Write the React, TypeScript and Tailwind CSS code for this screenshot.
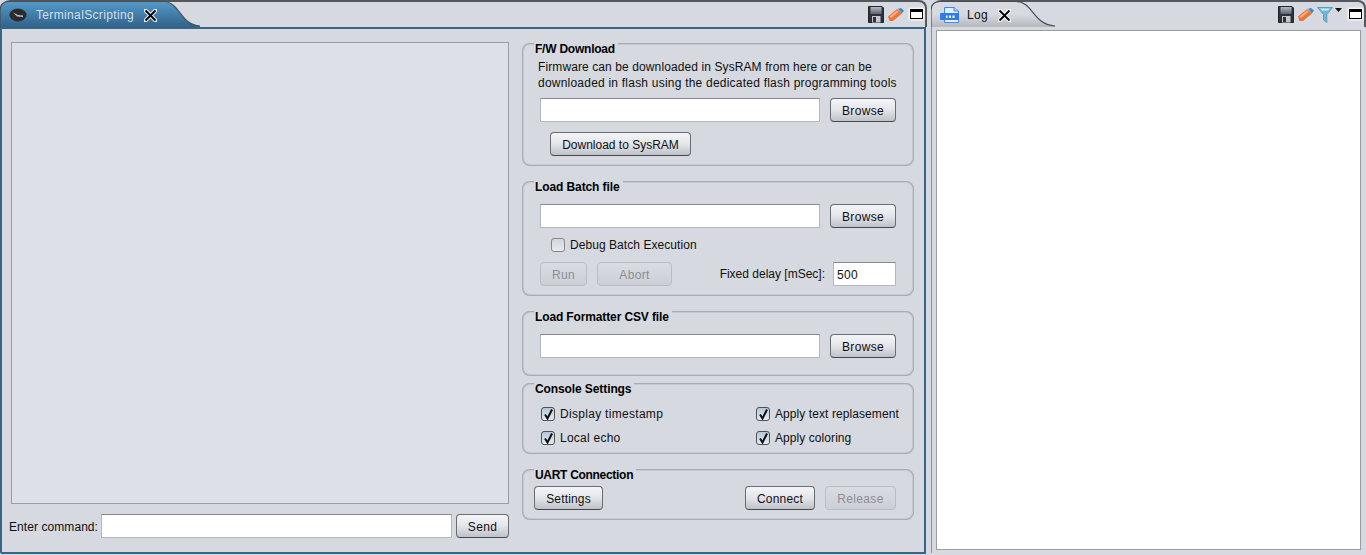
import React from "react";

const FONT = "font-['Liberation_Sans',Arial,sans-serif]";

function Save() {
  return (
    <svg width="16" height="17" viewBox="0 0 16 17" className="block">
      <defs>
        <linearGradient id="lab" x1="0" y1="0" x2="0" y2="1">
          <stop offset="0" stopColor="#b4b9c2" />
          <stop offset="1" stopColor="#5c6270" />
        </linearGradient>
      </defs>
      <path d="M0.5 0.5H14L15.5 2V16.5H0.5Z" fill="#2d333c" stroke="#23262c" />
      <rect x="2.5" y="1" width="11" height="7" fill="url(#lab)" />
      <rect x="4" y="10" width="8.5" height="6.5" fill="#c4c8ce" />
      <rect x="5" y="11" width="3" height="5" fill="#2d333c" />
    </svg>
  );
}

function Eraser() {
  return (
    <svg width="16" height="13" viewBox="0 0 16 13" className="block">
      <path d="M0 8.5L9 1L14 5.5L5 13L1.5 13Z" fill="#ee7435" />
      <path d="M1.5 8.5L9 2.5L10.5 3.8L3.2 10Z" fill="#f9b184" />
      <path d="M10 0.8L13 0L16 2.5L13.8 5.4Z" fill="#2f8fd8" />
    </svg>
  );
}

function Funnel() {
  return (
    <svg width="16" height="17" viewBox="0 0 16 17" className="block">
      <path d="M0.5 1.5H15.5L9.8 8.5V16.5L6.5 14V8.5Z" fill="#6fb9d6" stroke="#5a9fc0" strokeWidth="1" />
      <path d="M3 2.5H13L11 4.5H5Z" fill="#c4ecf5" />
    </svg>
  );
}

function Maximize() {
  return (
    <div className="w-[13px] h-[10px] border border-black border-t-[3px] bg-white shadow-[0_0_2px_1px_#ffffff]" />
  );
}

function CloseX() {
  return (
    <svg width="13" height="13" viewBox="0 0 13 13" className="block">
      <path d="M1.5 1.5L11.5 11.5M11.5 1.5L1.5 11.5" stroke="#ffffff" strokeWidth="4" strokeLinecap="round" opacity="0.85" />
      <path d="M1.5 1.5L11.5 11.5M11.5 1.5L1.5 11.5" stroke="#000000" strokeWidth="1.8" />
    </svg>
  );
}

function TerminalIcon() {
  return (
    <svg width="18" height="14" viewBox="0 0 18 14" className="block">
      <ellipse cx="9" cy="7" rx="8.5" ry="6.5" fill="#2b2b2d" />
      <path d="M4 4.5L9 7L14 7.5L14 9L8 8.5Z" fill="#b9bcc0" />
    </svg>
  );
}

function LogIcon() {
  return (
    <svg width="20" height="16" viewBox="0 0 20 16" className="block">
      <path d="M4.5 0.5H14L18.5 4V15.5H4.5Z" fill="#e4effc" stroke="#3f86ee" />
      <path d="M14 0.5V4H18.5" fill="#bcd6fa" stroke="#3f86ee" />
      <rect x="0" y="6" width="19" height="7" rx="1" fill="#2f7ce8" />
      <rect x="6" y="8.5" width="1.5" height="2.5" fill="#fff" />
      <rect x="9" y="8.5" width="2" height="2.5" fill="#fff" />
      <rect x="12.5" y="8.5" width="2" height="2.5" fill="#fff" />
    </svg>
  );
}

function Button({ children, w, disabled }: { children: React.ReactNode; w: string; disabled?: boolean }) {
  return (
    <div
      className={
        disabled
          ? `${w} h-[24px] pt-[1px] shrink-0 flex items-center justify-center rounded-[4px] border border-[#b9bcc2] bg-gradient-to-b from-[#d9dce2] to-[#ccd0d6] text-[#8b8e94]`
          : `${w} h-[24px] pt-[1px] shrink-0 flex items-center justify-center rounded-[4px] border border-[#6a6d72] border-b-[#45484c] bg-gradient-to-b from-[#f4f5f7] via-[#e3e5ea] to-[#bfc2c8] text-[#101010]`
      }
    >
      {children}
    </div>
  );
}

function Input({ w, value }: { w: string; value?: string }) {
  return (
    <div className={`${w} h-[24px] pt-[1px] shrink-0 bg-white border border-[#b4b7bc] border-t-[#85888d] px-[3px] flex items-center text-[#101010]`}>
      {value}
    </div>
  );
}

function Check({ checked }: { checked?: boolean }) {
  return (
    <div
      className={
        checked
          ? "w-[14px] h-[14px] shrink-0 rounded-[3px] border border-[#4f5257] bg-gradient-to-b from-[#b4c6da] to-[#e6edf3] flex items-center justify-center"
          : "w-[14px] h-[14px] shrink-0 rounded-[3px] border border-[#85888d] bg-gradient-to-b from-[#d2d5db] to-[#e8eaee]"
      }
    >
      {checked && (
        <svg width="11" height="11" viewBox="0 0 11 11" className="block">
          <path d="M2 5.5L4.5 9.5L9 0.5" fill="none" stroke="#111" strokeWidth="2" />
        </svg>
      )}
    </div>
  );
}

function Group({ title, className, titleClass, children }: { title: string; className: string; titleClass: string; children: React.ReactNode }) {
  return (
    <div className={`relative rounded-[8px] p-[2px] shadow-[inset_0_0_0_1px_#a9acb2,inset_0_0_0_2px_#c6c9cf] ${className}`}>
      <div className={`absolute left-[12px] top-0 bg-[#d6d9df] pl-[1px] pr-[3px] h-[13px] leading-[13px] font-bold text-black whitespace-nowrap ${titleClass}`}>
        {title}
      </div>
      {children}
    </div>
  );
}

function FileRow() {
  return (
    <div className="flex justify-between">
      <Input w="w-[280px]" />
      <Button w="w-[66px]">Browse</Button>
    </div>
  );
}

function Opt({ label, w, track }: { label: string; w: string; track: string }) {
  return (
    <div className={`flex items-center gap-[5px] shrink-0 ${w}`}>
      <Check checked />
      <span className={track}>{label}</span>
    </div>
  );
}

export default function App() {
  return (
    <div className={`${FONT} w-[1366px] h-[555px] overflow-hidden bg-[#d6d9df] flex text-[12px] tracking-[0.35px] text-[#101010]`}>
      {/* Left view */}
      <div className="w-[927px] h-[555px] flex flex-col shrink-0">
        <div className="relative h-[27px] shrink-0 border-t-2 border-r-2 border-[#54575c] rounded-tr-[8px] rounded-tl-[10px] flex items-center justify-between">
          <svg width="200" height="27" viewBox="0 0 200 27" className="absolute left-0 top-[-2px]">
            <defs>
              <linearGradient id="blueTab" x1="0" y1="0" x2="0" y2="1">
                <stop offset="0" stopColor="#5499c8" />
                <stop offset="1" stopColor="#30638a" />
              </linearGradient>
            </defs>
            <path d="M0 27V11Q0 2 9 2H163C180 2 180 25 200 26V27Z" fill="url(#blueTab)" />
            <path d="M0 27V11Q0 1.5 9 1.5H163C180 1.5 180 25 200 26" fill="none" stroke="#4a4d52" strokeWidth="1.2" />
          </svg>
          <div className="relative flex items-center pl-[9px] pt-[1px]">
            <TerminalIcon />
            <span className="ml-[9px] text-[#d5dfe9]">TerminalScripting</span>
            <span className="ml-[10px]"><CloseX /></span>
          </div>
          <div className="flex items-center pr-[2px] pb-[1px]">
            <Save />
            <span className="ml-[4px]"><Eraser /></span>
            <span className="ml-[6px]"><Maximize /></span>
          </div>
        </div>
        <div className="flex-1 mb-[1px] mr-[1px] border-2 border-[#36658a] flex rounded-bl-[2px] pt-[13px]">
          {/* left column */}
          <div className="w-[510px] shrink-0 flex flex-col pl-[7px]">
            <div className="ml-[2px] w-[498px] h-[462px] bg-[#dde0e6] border border-[#999ca2]" />
            <div className="mt-[10px] flex items-center">
              <span className="w-[92px] pt-[1px] whitespace-nowrap tracking-[0.07px]">Enter command:</span>
              <Input w="w-[351px]" />
              <span className="ml-[4px]"><Button w="w-[53px]">Send</Button></span>
            </div>
          </div>
          {/* right column */}
          <div className="ml-[10px] w-[392px] shrink-0 flex flex-col pt-[1px]">
            <Group title="F/W Download" titleClass="tracking-[-0.23px]" className="h-[123px]">
              <div className="pl-[14px] pt-[14px] leading-[16px] whitespace-nowrap">
                <div className="tracking-[0.1px]">Firmware can be downloaded in SysRAM from here or can be</div>
                <div className="tracking-[0.22px]">downloaded in flash using the dedicated flash programming tools</div>
              </div>
              <div className="mt-[7px] px-[16px]"><FileRow /></div>
              <div className="mt-[10px] pl-[26px]"><Button w="w-[141px]"><span className="tracking-[0px]">Download to SysRAM</span></Button></div>
            </Group>
            <Group title="Load Batch file" titleClass="tracking-[-0.1px]" className="h-[115px] mt-[15px]">
              <div className="mt-[21px] px-[16px]"><FileRow /></div>
              <div className="mt-[8px] pl-[27px] flex items-center gap-[5px]">
                <Check />
                <span className="tracking-[0.06px]">Debug Batch Execution</span>
              </div>
              <div className="mt-[8px] px-[16px] flex items-center">
                <Button w="w-[47px]" disabled>Run</Button>
                <span className="ml-[10px]"><Button w="w-[75px]" disabled>Abort</Button></span>
                <span className="ml-auto mr-[8px] whitespace-nowrap tracking-[0px]">Fixed delay [mSec]:</span>
                <Input w="w-[63px]" value="500" />
              </div>
            </Group>
            <Group title="Load Formatter CSV file" titleClass="tracking-[-0.13px]" className="h-[65px] mt-[15px]">
              <div className="mt-[21px] px-[16px]"><FileRow /></div>
            </Group>
            <Group title="Console Settings" titleClass="tracking-[-0.1px]" className="h-[71px] mt-[7px]">
              <div className="pt-[20px] pl-[17px] flex">
                <Opt label="Display timestamp" w="w-[215px]" track="tracking-[0.3px]" />
                <Opt label="Apply text replasement" w="w-[156px]" track="tracking-[0.08px]" />
              </div>
              <div className="pt-[6px] pl-[17px] flex">
                <Opt label="Local echo" w="w-[215px]" track="tracking-[0.25px]" />
                <Opt label="Apply coloring" w="w-[156px]" track="tracking-[0.07px]" />
              </div>
            </Group>
            <Group title="UART Connection" titleClass="tracking-[-0.3px]" className="h-[51px] mt-[15px]">
              <div className="mt-[15px] pl-[10px] pr-[16px] flex items-center">
                <Button w="w-[69px]"><span className="tracking-[0.15px]">Settings</span></Button>
                <span className="ml-auto"><Button w="w-[70px]"><span className="tracking-[0.2px]">Connect</span></Button></span>
                <span className="ml-[10px]"><Button w="w-[71px]" disabled>Release</Button></span>
              </div>
            </Group>
          </div>
        </div>
      </div>

      {/* Right view */}
      <div className="ml-[4px] flex-1 h-[555px] flex flex-col">
        <div className="relative h-[27px] shrink-0 border-t-2 border-r-2 border-[#54575c] rounded-tl-[10px] rounded-tr-[8px] flex items-center justify-between">
          <svg width="125" height="27" viewBox="0 0 125 27" className="absolute left-0 top-[-2px]">
            <defs>
              <linearGradient id="grayTab" x1="0" y1="0" x2="0" y2="1">
                <stop offset="0" stopColor="#d8dbe1" />
                <stop offset="0.5" stopColor="#d6d9df" />
                <stop offset="1" stopColor="#b5b8bd" />
              </linearGradient>
            </defs>
            <path d="M0 27V11Q0 2 9 2H85C102 2 102 25 124 26V27Z" fill="url(#grayTab)" />
            <path d="M0 27V11Q0 1.5 9 1.5H85C102 1.5 102 25 124 26" fill="none" stroke="#4a4d52" strokeWidth="1.2" />
          </svg>
          <div className="relative flex items-center pl-[9px] pt-[1px]">
            <LogIcon />
            <span className="ml-[7px]">Log</span>
            <span className="ml-[10px]"><CloseX /></span>
          </div>
          <div className="flex items-center pr-[2px] pb-[1px]">
            <Save />
            <span className="ml-[4px]"><Eraser /></span>
            <span className="ml-[3px]"><Funnel /></span>
            <svg width="7" height="4" viewBox="0 0 7 4" className="block mb-[8px] ml-[2px]"><path d="M0 0H7L3.5 4Z" fill="#111" /></svg>
            <span className="ml-[7px]"><Maximize /></span>
          </div>
        </div>
        <div className="flex-1 mb-[2px] border-l border-[#8d9096] pl-[4px] pr-[5px] pt-[3px] pb-[3px] flex">
          <div className="flex-1 bg-white border border-[#999ca2]" />
        </div>
      </div>
    </div>
  );
}
